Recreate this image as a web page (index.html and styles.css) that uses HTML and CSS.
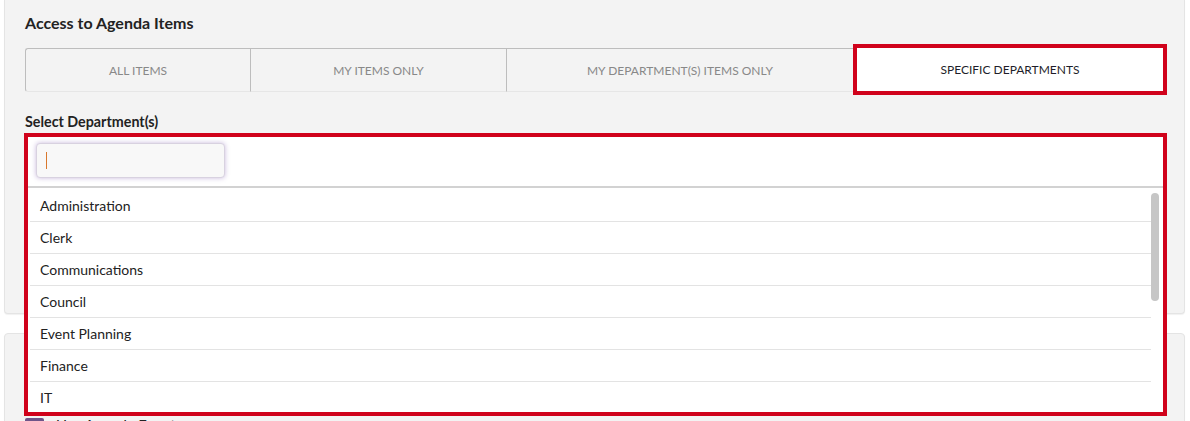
FILE: index.html
```html
<!DOCTYPE html>
<html lang="en">
<head>
<meta charset="utf-8">
<title>Access to Agenda Items</title>
<link rel="stylesheet" href="styles.css">
</head>
<body>
<div class="page">
  <section class="card card-access">
    <h2 class="card-title">Access to Agenda Items</h2>
    <div class="tabs">
      <div class="tab tab-all">ALL ITEMS</div>
      <div class="tab tab-mine">MY ITEMS ONLY</div>
      <div class="tab tab-dept">MY DEPARTMENT(S) ITEMS ONLY</div>
      <div class="tab tab-specific is-active">SPECIFIC DEPARTMENTS</div>
    </div>
    <div class="field-label">Select Department(s)</div>
    <div class="multiselect">
      <div class="ms-control">
        <div class="ms-search"><span class="caret"></span></div>
      </div>
      <div class="ms-menu">
        <ul class="ms-options">
          <li>Administration</li>
          <li>Clerk</li>
          <li>Communications</li>
          <li>Council</li>
          <li>Event Planning</li>
          <li>Finance</li>
          <li>IT</li>
        </ul>
        <div class="ms-scroll"><div class="ms-thumb"></div></div>
      </div>
    </div>
  </section>
  <section class="card card-events">
    <div class="check-row">
      <span class="checkbox"></span>
      <span class="check-label">Use Agenda Events</span>
    </div>
  </section>
</div>
</body>
</html>
```

FILE: styles.css
```css
* { box-sizing: border-box; }

html, body {
  margin: 0;
  padding: 0;
  background: #ffffff;
  font-family: Lato, "Open Sans", "Liberation Sans", sans-serif;
  color: #222222;
  height: 421px;
  overflow: hidden;
}

.page {
  padding: 0 5px 0 4px;
}

.card {
  background: #f3f3f3;
  border: 1px solid #e4e4e4;
  border-radius: 4px;
  box-shadow: 0 1px 1px rgba(0, 0, 0, 0.06);
}

.card-access {
  height: 314px;
  padding: 13px 21px 0 20px;
  border-top: none;
  border-radius: 0 0 4px 4px;
}

.card-title {
  margin: 0;
  font-size: 16px;
  line-height: 19px;
  font-weight: 700;
  color: #222222;
}

.tabs {
  display: flex;
  margin-top: 16px;
  height: 44px;
}

.tab {
  display: flex;
  align-items: center;
  justify-content: center;
  font-size: 12px;
  color: #888888;
  border-top: 1px solid #bdbdbd;
  border-bottom: 1px solid #e6e6e6;
  border-left: 1px solid #bdbdbd;
  background: #f3f3f3;
}

.tab-all {
  width: 225px;
  border-radius: 3px 0 0 3px;
}

.tab-mine { width: 256px; }
.tab-dept { width: 347px; }

.tab-specific {
  flex: 1;
}

.tab.is-active {
  position: relative;
  background: #ffffff;
  color: #1e1e2a;
  border: none;
  outline: 4px solid #d0021b;
  outline-offset: 0;
  margin: 0 0 1px 4px;
}

.field-label {
  margin-top: 21px;
  font-size: 14.3px;
  line-height: 18px;
  font-weight: 700;
  color: #222222;
}

.multiselect {
  position: relative;
  z-index: 2;
  height: 283px;
  margin: 2px -4px 0 -1px;
  border: 4px solid #d0021b;
  background: #ffffff;
  overflow: hidden;
}

.ms-control {
  padding: 6px 8px 8px 8px;
  border-bottom: 2px solid #d2d2d2;
}

.ms-search {
  width: 189px;
  height: 35px;
  background: #f8f8f8;
  border: 1px solid #d8d2e0;
  border-radius: 4px;
  box-shadow: 0 0 5px rgba(120, 80, 170, 0.4);
  display: flex;
  align-items: center;
  padding-left: 9px;
}

.caret {
  display: block;
  width: 1px;
  height: 17px;
  background: #d9782d;
}

.ms-menu {
  display: flex;
  padding-top: 2px;
}

.ms-options {
  list-style: none;
  margin: 0 0 0 2px;
  padding: 0;
  flex: 1;
}

.ms-options li {
  height: 32px;
  padding-left: 10px;
  display: flex;
  align-items: center;
  font-size: 14px;
  color: #222222;
  border-bottom: 1px solid #e3e3e3;
}

.ms-scroll {
  width: 12px;
  padding: 3px 4px 0 0;
}

.ms-thumb {
  width: 8px;
  height: 108px;
  background: #c6c6c6;
  border-radius: 4px;
}

.card-events {
  margin-top: 19px;
  padding: 82px 21px 0 20px;
  height: 200px;
}

.check-row {
  display: flex;
  align-items: flex-start;
  gap: 12px;
}

.checkbox {
  display: block;
  width: 19px;
  height: 19px;
  margin-top: 2px;
  background: #6e5489;
  border-radius: 2px;
}

.check-label {
  font-size: 15px;
  line-height: 18px;
  color: #222222;
}
```
